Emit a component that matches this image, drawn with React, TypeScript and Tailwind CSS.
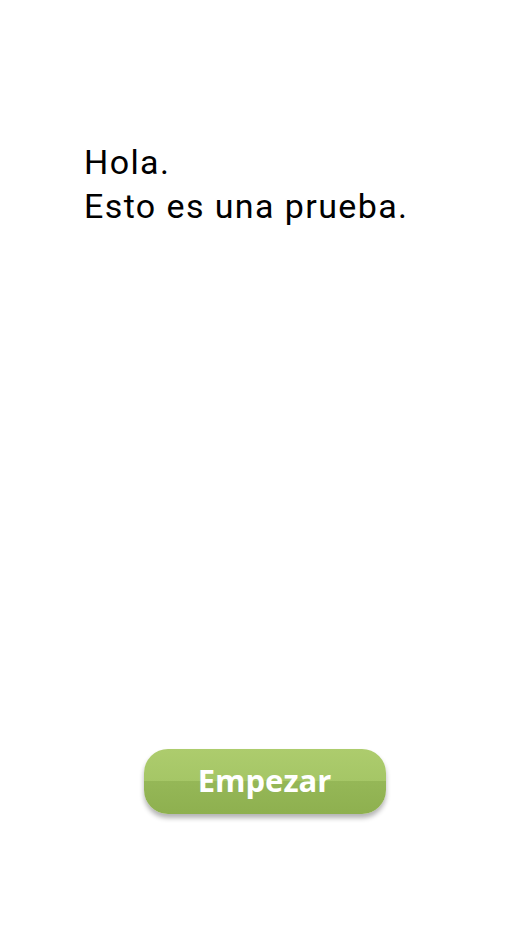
import React from 'react';

export default function App() {
  return (
    <div className="w-[528px] h-[940px] bg-white flex flex-col">
      <div
        className="pl-[84px] pt-[140px] text-[34px] leading-[44px] tracking-[1.4px] text-black"
        style={{ fontFamily: 'Roboto, "Liberation Sans", sans-serif' }}
      >
        <p>Hola.</p>
        <p>Esto es una prueba.</p>
      </div>
      <div className="flex-1" />
      <div className="flex justify-center pb-[126px] pl-[1px]">
        <button
          className="w-[242px] h-[65px] rounded-[24px] shadow-[0_4px_5px_rgba(0,0,0,0.3)] bg-[linear-gradient(to_bottom,#adcc6d_0%,#a5c666_50%,#95b757_50%,#8eb04f_100%)] text-white font-bold text-[31px] pb-[2px]"
          style={{ fontFamily: '"Open Sans", "Liberation Sans", sans-serif' }}
        >
          Empezar
        </button>
      </div>
    </div>
  );
}
